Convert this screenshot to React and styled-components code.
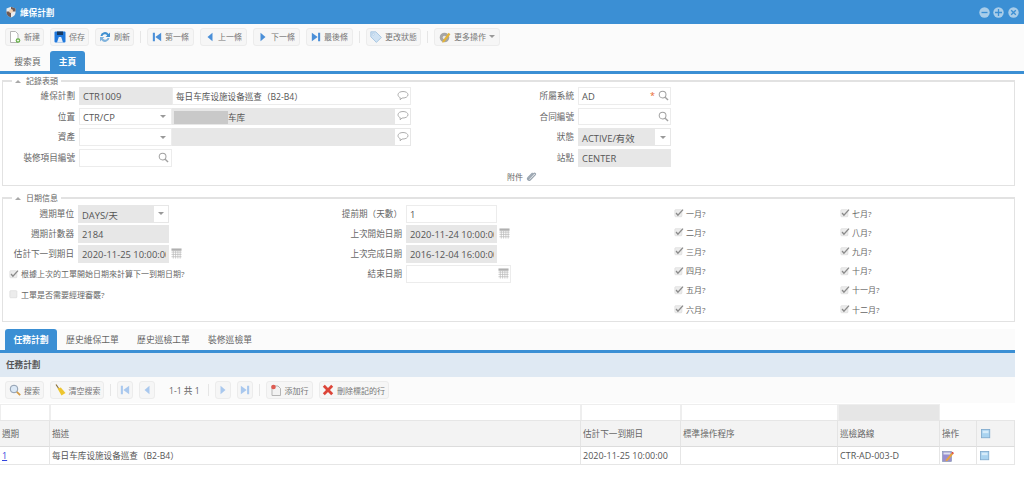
import React from 'react';
import styled, { createGlobalStyle } from 'styled-components';

const GlobalStyle = createGlobalStyle`
  html, body {
    margin: 0;
    padding: 0;
    background: #fff;
  }
  body {
    font-family: "Open Sans", "Noto Sans CJK TC", sans-serif;
    font-size: 8.6px;
    color: #666;
  }
  * {
    box-sizing: border-box;
  }
`;

const Page = styled.div`
  width: 1024px;
  height: 497px;
  overflow: hidden;
`;

/* title bar */
const TitleBar = styled.div`
  height: 24px;
  background: #3b8fd4;
  display: flex;
  align-items: center;
  padding: 0 5px 0 5px;
  color: #fff;
  font-weight: 700;
  gap: 3px;
`;

const TitleText = styled.span`
  flex: 1;
`;

const WinButtons = styled.div`
  display: flex;
  gap: 3.6px;
`;

/* toolbars */
const Toolbar = styled.div`
  display: flex;
  align-items: center;
  gap: 6px;
  background: #fbfbfb;
  height: ${(p) => p.$h}px;
  padding: ${(p) => p.$pad || '0 0 0 5px'};
`;

const ToolButton = styled.div`
  width: ${(p) => p.$w}px;
  height: 18px;
  display: flex;
  align-items: center;
  justify-content: center;
  gap: 3px;
  background: #f6f6f6;
  border: 1px solid #ececec;
  border-radius: 3px;
  color: #777;
  font-size: 8px;
  white-space: nowrap;
`;

const Divider = styled.span`
  width: 1px;
  height: 12px;
  background: #e6e6e6;
`;

const Pager = styled.span`
  color: #666;
  padding: 0 2px 0 8px;
  white-space: nowrap;
`;

const Caret = styled.span`
  width: 0;
  height: 0;
  border-left: 3px solid transparent;
  border-right: 3px solid transparent;
  border-top: 3.5px solid #999;
  flex: none;
`;

/* tabs */
const TabRow = styled.div`
  display: flex;
  align-items: flex-end;
  height: ${(p) => p.$h}px;
  padding-left: ${(p) => p.$left}px;
  background: #fbfbfb;
  border-bottom: 3px solid #3b8fd4;
  width: ${(p) => p.$width || 1024}px;
`;

const Tab = styled.div`
  width: ${(p) => p.$w}px;
  height: ${(p) => p.$tabH}px;
  display: flex;
  align-items: center;
  justify-content: center;
  color: ${(p) => (p.$active ? '#fff' : '#666')};
  background: ${(p) => (p.$active ? '#3b8fd4' : 'transparent')};
  border-radius: 3px 3px 0 0;
  font-weight: ${(p) => (p.$active ? 700 : 400)};
  font-size: 8.8px;
`;

/* fieldsets */
const Content = styled.div`
  padding: 0 9px 0 2px;
`;

const Group = styled.fieldset`
  margin: ${(p) => p.$top}px 0 0;
  padding: 0;
  min-width: 0;
  border: 1px solid #e2e2e2;
  border-top-width: 2px;
  height: ${(p) => p.$h}px;
`;

const GroupTitle = styled.legend`
  margin-left: 9px;
  padding: 0 3px;
  height: 12px;
  line-height: 12px;
  display: flex;
  align-items: center;
  gap: 5px;
  color: #666;
  font-size: 8px;
`;

const UpArrow = styled.span`
  width: 0;
  height: 0;
  border-left: 3px solid transparent;
  border-right: 3px solid transparent;
  border-bottom: 3.5px solid #a8a8a8;
`;

const Columns = styled.div`
  display: flex;
  padding-top: ${(p) => p.$top || 0}px;
`;

const Column = styled.div`
  width: ${(p) => p.$w}px;
  display: flex;
  flex-direction: column;
  gap: ${(p) => p.$gap}px;
  flex: none;
`;

const Row = styled.div`
  display: flex;
  height: 17.8px;
`;

const Label = styled.div`
  width: ${(p) => p.$w}px;
  padding-right: 4px;
  text-align: right;
  line-height: 19px;
  white-space: nowrap;
  flex: none;
`;

const Field = styled.div`
  width: ${(p) => p.$w}px;
  height: 100%;
  display: flex;
  align-items: center;
  background: ${(p) => (p.$gray ? '#e7e7e7' : '#fff')};
  border: 1px solid ${(p) => (p.$gray ? '#e7e7e7' : '#ececec')};
  flex: none;
`;

const Value = styled.div`
  flex: 1;
  min-width: 0;
  margin-right: 2px;
  padding: 1.5px 0 0 3px;
  overflow: hidden;
  white-space: nowrap;
  color: #555;
  font-size: 9.4px;
  display: flex;
  align-items: center;
`;

const CjkText = styled.span`
  font-size: 8.6px;
`;

const Adorn = styled.div`
  width: ${(p) => p.$w}px;
  height: 100%;
  display: flex;
  align-items: center;
  justify-content: center;
  flex: none;
  background: #fff;
`;

const Required = styled.span`
  color: #e8662c;
  font-size: 9px;
  margin-right: 1px;
`;

const Redacted = styled.span`
  width: 54px;
  height: 13px;
  background: #c9c9c9;
  margin-left: -2px;
  flex: none;
`;

const AttachRow = styled.div`
  display: flex;
  align-items: center;
  gap: 3px;
  height: 15px;
  padding-left: 27px;
  font-size: 8px;
`;

const CheckRow = styled.label`
  display: flex;
  align-items: center;
  gap: 2px;
  height: 18px;
  padding-left: 6px;
  color: #666;
  font-size: 8px;
`;

const MonthGrid = styled.div`
  display: grid;
  grid-template-columns: 166px 166px;
  grid-auto-rows: 19.2px;
  margin-top: -1.5px;
`;

const MonthCheck = styled.label`
  display: flex;
  align-items: center;
  gap: 2px;
  font-size: 8px;
`;

/* lower panel */
const Lower = styled.div`
  width: 1015px;
  margin-top: 7px;
`;

const PanelHeader = styled.div`
  height: 24px;
  background: #dfe9f3;
  color: #555;
  font-weight: 700;
  line-height: 24px;
  padding-left: 6px;
`;

const Table = styled.div`
  display: grid;
  grid-template-columns: 50px 531px 100px 157px 102px 37px 38px;
  margin-top: 1px;
`;

const FilterCell = styled.div`
  height: 16px;
  background: ${(p) => (p.$gray ? '#e6e6e6' : '#fff')};
  border: ${(p) => (p.$bare ? 'none' : '1px solid #eee')};
  border-bottom: none;
`;

const HeadCell = styled.div`
  height: 27px;
  background: #f3f3f3;
  border-top: 1px solid #e6e6e6;
  border-bottom: 1px solid #dcdcdc;
  border-right: 1px solid #e4e4e4;
  padding-left: ${(p) => p.$pad || 2}px;
  display: flex;
  align-items: center;
  color: #666;
`;

const BodyCell = styled.div`
  height: 18px;
  border-bottom: 1px solid #e6e6e6;
  border-right: 1px solid #e6e6e6;
  padding-left: ${(p) => p.$pad || 2}px;
  display: flex;
  align-items: center;
  color: #555;
  font-size: 9px;
  white-space: nowrap;
`;

const RowLink = styled.a`
  color: #3344dd;
  text-decoration: underline;
`;

/* icons */
const Svg = ({ size = 12, children }) => (
  <svg width={size} height={size} viewBox="0 0 12 12" style={{ flex: 'none' }}>
    {children}
  </svg>
);

const NewIcon = () => (
  <Svg>
    <path d="M1.5.5h5L9 3v8.500H1.500z" fill="#fff" stroke="#b5b5b5" />
    <circle cx="9" cy="9.500" r="2.300" fill="#63ad44" />
    <path d="M7.800 9.500h2.400M9 8.300v2.400" stroke="#fff" strokeWidth=".8" />
  </Svg>
);
const SaveIcon = () => (
  <Svg>
    <rect x=".5" y=".5" width="11" height="11" rx="1" fill="#1f78dc" />
    <rect x="3" y=".5" width="6" height="3.500" fill="#173a63" />
    <path d="M3 11.500 4.800 6h2.400L9 11.500z" fill="#e6eef8" />
  </Svg>
);
const RefreshIcon = () => (
  <Svg>
    <path d="M1.500 5A4.500 4.500 0 0 1 9.600 3L11 1.600V6H6.600l1.600-1.600A2.800 2.800 0 0 0 3.400 5z" fill="#3f8fd0" />
    <path d="M10.500 7A4.500 4.500 0 0 1 2.400 9L1 10.400V6h4.400L3.800 7.600A2.800 2.800 0 0 0 8.600 7z" fill="#7fb2dc" />
  </Svg>
);
const EdgeIcon = ({ dir = 'left', light }) => {
  const c = light ? '#a9c8ee' : '#4a8fd8';
  return (
    <Svg size={10}>
      {dir === 'left' ? (
        <path d="M1 1h2.500v10H1zM11 1v10L4 6z" fill={c} />
      ) : (
        <path d="M11 1H8.500v10H11zM1 1v10l7-5z" fill={c} />
      )}
    </Svg>
  );
};
const StepIcon = ({ dir = 'left', light }) => {
  const c = light ? '#a9c8ee' : '#4a8fd8';
  return (
    <Svg size={10}>
      <path d={dir === 'left' ? 'M9 1v10L3 6z' : 'M3 1v10l6-5z'} fill={c} />
    </Svg>
  );
};
const TagIcon = () => (
  <Svg>
    <path d="M.8.8h5l5.600 5.600-5 5L.8 5.800z" fill="#cfe2f3" stroke="#9dbfdd" strokeWidth=".8" />
    <circle cx="3.200" cy="3.200" r="1" fill="#fff" stroke="#8fb5d8" strokeWidth=".5" />
  </Svg>
);
const MoreIcon = () => (
  <Svg>
    <circle cx="5.500" cy="6.500" r="4.800" fill="#a5a5a5" />
    <circle cx="5.500" cy="6.500" r="1.800" fill="#e8e8e8" />
    <path d="m3.600 9.800 6-8 1.800 1.400-6 7.800-2.200.7z" fill="#e3b43a" />
  </Svg>
);
const SearchBigIcon = () => (
  <Svg>
    <circle cx="5" cy="5" r="3.800" fill="#dbe8f5" stroke="#8d9cae" />
    <path d="m7.800 7.800 3.400 3.400" stroke="#d39a45" strokeWidth="1.800" />
  </Svg>
);
const BroomIcon = () => (
  <Svg>
    <path d="M2 .5 5 5" stroke="#8a6f3a" strokeWidth="1.200" />
    <path d="M3.500 4.500 6.800 3.500 11.500 9 7.500 11.500z" fill="#edc52f" />
  </Svg>
);
const AddRowIcon = () => (
  <Svg>
    <path d="M2 2h6l2.500 2.500v7H2z" fill="#f2f2f2" stroke="#b5b5b5" />
    <circle cx="3.500" cy="3" r="2.300" fill="#de5b52" />
  </Svg>
);
const DeleteIcon = () => (
  <Svg>
    <path d="M1.800 1.800 10.200 10.200M10.200 1.800 1.800 10.200" stroke="#dc4438" strokeWidth="2.800" />
  </Svg>
);
const EditIcon = () => (
  <Svg>
    <rect x=".5" y="1.500" width="9" height="10" fill="#9a8fd0" stroke="#7d8fb0" strokeWidth=".6" />
    <rect x="1.500" y="2.500" width="7" height="2" fill="#dfe3ee" />
    <path d="m4 9.500 5.500-6.500 1.600 1.300-5.500 6.500-2 .5z" fill="#e9a23c" />
    <path d="m9.500 3 1-1.200 1.400 1.200-.8 1.300z" fill="#d8392c" />
  </Svg>
);
const Bubble = () => (
  <Svg>
    <path d="M6 1.500c2.800 0 5 1.300 5 3.200S8.800 8 6 8H5L3.200 9.800V7.600C1.800 7.100 1 6 1 4.700 1 2.800 3.200 1.500 6 1.500z" fill="#fff" stroke="#a5a5a5" strokeWidth=".9" />
  </Svg>
);
const Magnifier = () => (
  <Svg size={11}>
    <circle cx="5" cy="5" r="3.700" fill="none" stroke="#a0a0a0" strokeWidth="1.100" />
    <path d="m7.800 7.800 3.200 3.200" stroke="#a0a0a0" strokeWidth="1.500" />
  </Svg>
);
const Calendar = () => (
  <Svg size={11}>
    <rect x=".5" y=".5" width="11" height="2.500" fill="#b0b0b0" />
    <path d="M.5 4.500h11M.5 7h11M.5 9.500h11M2.500 3v8.500M5 3v8.500M7.500 3v8.500M10 3v8.500" stroke="#bbb" strokeWidth=".8" fill="none" />
  </Svg>
);
const Clip = () => (
  <Svg size={11}>
    <path d="M2.500 9 8.500 2.700c1-1 2.500.4 1.500 1.500L4.800 9.500c-1.800 1.800-4.300-.6-2.500-2.500l4.900-5" fill="none" stroke="#9aa5b0" strokeWidth="1.400" />
  </Svg>
);
const Tick = ({ checked }) => (
  <Svg size={10}>
    <rect x="1" y="2" width="8.500" height="8.500" rx="1" fill="#ececec" stroke="#d8d8d8" strokeWidth=".7" />
    {checked && <path d="m2.500 6 2.200 2.600L10.800 2" fill="none" stroke="#8a8a8a" strokeWidth="1.600" />}
  </Svg>
);
const BlueBox = () => (
  <Svg size={10}>
    <rect x=".5" y=".5" width="10" height="10" fill="#a9d3f0" stroke="#7fa9cc" />
    <rect x="2" y="2" width="7" height="3" fill="#d6ebf9" />
  </Svg>
);
const WinIcon = ({ kind }) => (
  <svg width="11" height="11" viewBox="0 0 11 11">
    <circle cx="5.500" cy="5.500" r="5.200" fill="#a9cde9" />
    {kind === 'min' && <path d="M2.500 5.500h6" stroke="#3b8fd4" strokeWidth="1.300" />}
    {kind === 'max' && <path d="M5.500 2v7M2 5.500h7" stroke="#3b8fd4" strokeWidth="1.300" />}
    {kind === 'close' && <path d="m3.200 3.200 4.600 4.600m0-4.600L3.200 7.800" stroke="#3b8fd4" strokeWidth="1.300" />}
  </svg>
);
const AppIcon = () => (
  <Svg>
    <path d="M1.500 2.500 6 .8l4.500 1.700v4c0 2.700-2.200 4-4.500 5-2.300-1-4.500-2.300-4.500-5z" fill="#e9ecef" />
    <path d="M6 .8l4.500 1.700v3H6zM1.500 5.500H6v6c-2.300-1-4.500-2.300-4.500-5z" fill="#6f5a55" />
    <circle cx="6" cy="5" r="2" fill="#f1d3b5" />
  </Svg>
);

const months = [
  ['一月?', '七月?'],
  ['二月?', '八月?'],
  ['三月?', '九月?'],
  ['四月?', '十月?'],
  ['五月?', '十一月?'],
  ['六月?', '十二月?'],
];

const App = () => (
  <Page>
    <GlobalStyle />
    <TitleBar>
      <AppIcon />
      <TitleText>維保計劃</TitleText>
      <WinButtons>
        <WinIcon kind="min" />
        <WinIcon kind="max" />
        <WinIcon kind="close" />
      </WinButtons>
    </TitleBar>

    <Toolbar $h={24} $pad="1px 0 0 5px">
      <ToolButton $w={39}><NewIcon />新建</ToolButton>
      <ToolButton $w={39}><SaveIcon />保存</ToolButton>
      <ToolButton $w={39}><RefreshIcon />刷新</ToolButton>
      <Divider />
      <ToolButton $w={47}><EdgeIcon />第一條</ToolButton>
      <ToolButton $w={47}><StepIcon />上一條</ToolButton>
      <ToolButton $w={47}><StepIcon dir="right" />下一條</ToolButton>
      <ToolButton $w={47}><EdgeIcon dir="right" />最後條</ToolButton>
      <Divider />
      <ToolButton $w={55}><TagIcon />更改狀態</ToolButton>
      <Divider />
      <ToolButton $w={66}><MoreIcon />更多操作<Caret /></ToolButton>
    </Toolbar>
    <TabRow $h={26} $left={5}>
      <Tab $w={45} $tabH={20}>搜索頁</Tab>
      <Tab $w={35} $tabH={20} $active>主頁</Tab>
    </TabRow>

    <Content>
      <Group $top={1} $h={111}>
        <GroupTitle><UpArrow />記錄表頭</GroupTitle>
        <Columns>
          <Column $w={477} $gap={2.8}>
            <Row>
              <Label $w={76}>維保計劃</Label>
              <Field $w={93} $gray><Value>CTR1009</Value></Field>
              <Field $w={239}><Value><CjkText>每日车库设施设备巡查（B2-B4）</CjkText></Value><Adorn $w={15}><Bubble /></Adorn></Field>
            </Row>
            <Row>
              <Label $w={76}>位置</Label>
              <Field $w={93}><Value>CTR/CP</Value><Adorn $w={16}><Caret /></Adorn></Field>
              <Field $w={239} $gray><Value><Redacted /><CjkText>车库</CjkText></Value><Adorn $w={15}><Bubble /></Adorn></Field>
            </Row>
            <Row>
              <Label $w={76}>資產</Label>
              <Field $w={93}><Value /><Adorn $w={16}><Caret /></Adorn></Field>
              <Field $w={239} $gray><Value /><Adorn $w={15}><Bubble /></Adorn></Field>
            </Row>
            <Row>
              <Label $w={76}>裝修項目編號</Label>
              <Field $w={93}><Value /><Adorn $w={15}><Magnifier /></Adorn></Field>
            </Row>
          </Column>
          <Column $w={300} $gap={2.8}>
            <Row>
              <Label $w={98}>所屬系統</Label>
              <Field $w={93}><Value>AD</Value><Required>*</Required><Adorn $w={14}><Magnifier /></Adorn></Field>
            </Row>
            <Row>
              <Label $w={98}>合同編號</Label>
              <Field $w={93}><Value /><Adorn $w={14}><Magnifier /></Adorn></Field>
            </Row>
            <Row>
              <Label $w={98}>狀態</Label>
              <Field $w={93} $gray><Value>ACTIVE/有效</Value><Adorn $w={15}><Caret /></Adorn></Field>
            </Row>
            <Row>
              <Label $w={98}>站點</Label>
              <Field $w={93} $gray><Value>CENTER</Value></Field>
            </Row>
            <AttachRow>附件 <Clip /></AttachRow>
          </Column>
        </Columns>
      </Group>

      <Group $top={6} $h={130}>
        <GroupTitle><UpArrow />日期信息</GroupTitle>
        <Columns $top={1}>
          <Column $w={297} $gap={2.2}>
            <Row>
              <Label $w={75}>週期單位</Label>
              <Field $w={91} $gray><Value>DAYS/天</Value><Adorn $w={14}><Caret /></Adorn></Field>
            </Row>
            <Row>
              <Label $w={75}>週期計數器</Label>
              <Field $w={91} $gray><Value>2184</Value></Field>
            </Row>
            <Row>
              <Label $w={75}>估計下一到期日</Label>
              <Field $w={91} $gray><Value>2020-11-25 10:00:00</Value></Field>
              <Adorn $w={14}><Calendar /></Adorn>
            </Row>
            <CheckRow><Tick checked />根據上次的工單開始日期來計算下一到期日期?</CheckRow>
            <CheckRow><Tick />工單是否需要經理審覈?</CheckRow>
          </Column>
          <Column $w={374} $gap={2.2}>
            <Row>
              <Label $w={106}>提前期（天數）</Label>
              <Field $w={91}><Value>1</Value></Field>
            </Row>
            <Row>
              <Label $w={106}>上次開始日期</Label>
              <Field $w={91} $gray><Value>2020-11-24 10:00:00</Value></Field>
              <Adorn $w={14}><Calendar /></Adorn>
            </Row>
            <Row>
              <Label $w={106}>上次完成日期</Label>
              <Field $w={91} $gray><Value>2016-12-04 16:00:00</Value></Field>
            </Row>
            <Row>
              <Label $w={106}>結束日期</Label>
              <Field $w={105}><Value /><Adorn $w={14}><Calendar /></Adorn></Field>
            </Row>
          </Column>
          <MonthGrid>
            {months.flat().map((m) => (
              <MonthCheck key={m}><Tick checked />{m}</MonthCheck>
            ))}
          </MonthGrid>
        </Columns>
      </Group>
    </Content>

    <Lower>
      <TabRow $h={24} $left={5} $width={1015}>
        <Tab $w={52} $tabH={21} $active>任務計劃</Tab>
        <Tab $w={71} $tabH={21}>歷史維保工單</Tab>
        <Tab $w={71} $tabH={21}>歷史巡檢工單</Tab>
        <Tab $w={62} $tabH={21}>裝修巡檢單</Tab>
      </TabRow>
      <PanelHeader>任務計劃</PanelHeader>
      <Toolbar $h={26}>
        <ToolButton $w={39}><SearchBigIcon />搜索</ToolButton>
        <ToolButton $w={54}><BroomIcon />清空搜索</ToolButton>
        <Divider />
        <ToolButton $w={16}><EdgeIcon light /></ToolButton>
        <ToolButton $w={16}><StepIcon light /></ToolButton>
        <Pager>1-1 共 1</Pager>
        <Divider />
        <ToolButton $w={16}><StepIcon dir="right" light /></ToolButton>
        <ToolButton $w={16}><EdgeIcon dir="right" light /></ToolButton>
        <Divider />
        <ToolButton $w={47}><AddRowIcon />添加行</ToolButton>
        <ToolButton $w={70}><DeleteIcon />刪除標記的行</ToolButton>
      </Toolbar>
      <Table>
        <FilterCell />
        <FilterCell />
        <FilterCell />
        <FilterCell />
        <FilterCell $gray />
        <FilterCell $bare />
        <FilterCell $bare />
        <HeadCell>週期</HeadCell>
        <HeadCell>描述</HeadCell>
        <HeadCell>估計下一到期日</HeadCell>
        <HeadCell>標準操作程序</HeadCell>
        <HeadCell>巡檢路線</HeadCell>
        <HeadCell>操作</HeadCell>
        <HeadCell $pad={4}><BlueBox /></HeadCell>
        <BodyCell><RowLink>1</RowLink></BodyCell>
        <BodyCell><CjkText>每日车库设施设备巡查（B2-B4）</CjkText></BodyCell>
        <BodyCell>2020-11-25 10:00:00</BodyCell>
        <BodyCell />
        <BodyCell>CTR-AD-003-D</BodyCell>
        <BodyCell><EditIcon /></BodyCell>
        <BodyCell $pad={3}><BlueBox /></BodyCell>
      </Table>
    </Lower>
  </Page>
);

export default App;
